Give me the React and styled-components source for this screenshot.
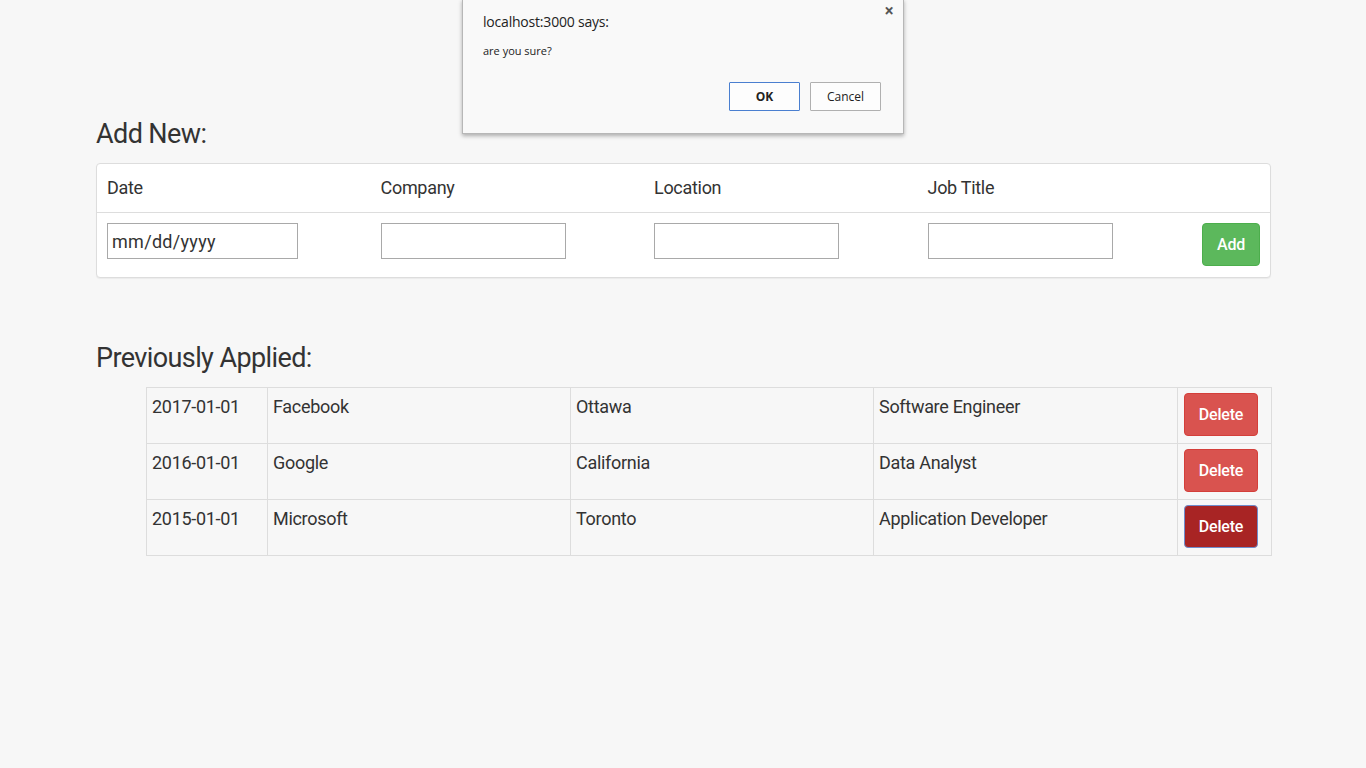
import React from "react";
import styled, { createGlobalStyle } from "styled-components";

const Global = createGlobalStyle`
  html, body { margin: 0; padding: 0; }
  body {
    background: #f7f7f7;
    font-family: Roboto, "Liberation Sans", sans-serif;
    color: #333;
    min-height: 768px;
  }
`;

const Page = styled.div`
  position: relative;
  width: 1366px;
  min-height: 768px;
`;

const Container = styled.div`
  width: 1175px;
  margin-left: 96px;
  padding-top: 118px;
`;

const Heading = styled.h3`
  margin: 0 0 ${(p) => p.$gap || 12}px 0;
  font-size: 27px;
  font-weight: 400;
  letter-spacing: -0.6px;
  line-height: 33px;
  color: #333;
`;

const Panel = styled.div`
  background: #fff;
  border: 1px solid #ddd;
  border-radius: 4px;
  box-shadow: 0 1px 1px rgba(0, 0, 0, 0.05);
  margin-bottom: 64px;
`;

const FormRow = styled.div`
  box-sizing: border-box;
  display: grid;
  grid-template-columns: repeat(4, 273.5px) 1fr;
  align-items: ${(p) => (p.$top ? "start" : "center")};
  padding: ${(p) => (p.$top ? "10px 10px 0" : "0 10px")};
  height: ${(p) => p.$h}px;
  border-bottom: ${(p) => (p.$divider ? "1px solid #ddd" : "none")};
`;

const Label = styled.div`
  font-size: 18px;
  letter-spacing: -0.3px;
  color: #333;
  margin-top: -2px;
`;

const Input = styled.input`
  box-sizing: border-box;
  width: ${(p) => p.$w}px;
  height: 36px;
  border: 1px solid #a9a9a9;
  background: #fff;
  padding: 0 4px;
  font-family: inherit;
  font-size: 18px;
  letter-spacing: 0.3px;
  color: #333;
  &::placeholder { color: #333; }
`;

const Btn = styled.button`
  box-sizing: border-box;
  justify-self: ${(p) => (p.$end ? "end" : "start")};
  display: block;
  height: ${(p) => p.$h || 43}px;
  width: ${(p) => p.$w}px;
  border-radius: 4px;
  border: 1px solid ${(p) => p.$border};
  background: ${(p) => p.$bg};
  color: #fff;
  font-family: inherit;
  font-size: 16px;
  font-weight: 500;
  letter-spacing: -0.2px;
  cursor: pointer;
  padding: 0;
`;

const Table = styled.table`
  margin-left: 50px;
  width: 1125px;
  border-collapse: collapse;
  table-layout: fixed;
  background: #f7f7f7;
`;

const Td = styled.td`
  box-sizing: border-box;
  border: 1px solid #ddd;
  padding: 5px 5px 5px ${(p) => (p.$btn ? 6 : 5)}px;
  height: 56px;
  vertical-align: top;
  font-size: 18px;
  letter-spacing: -0.3px;
  line-height: 28px;
  color: #333;
  width: ${(p) => p.$w}px;
`;

const Dialog = styled.div`
  position: absolute;
  left: 462px;
  top: -1px;
  width: 440px;
  height: 133px;
  background: #f9f9f9;
  border: 1px solid #b7b7b7;
  box-shadow: 0 2px 4px rgba(0, 0, 0, 0.3);
  font-family: "Open Sans", "Noto Sans", sans-serif;
  color: #222;
`;

const DialogBody = styled.div`
  display: flex;
  flex-direction: column;
  padding: 12px 22px 0 20px;
`;

const DialogTitle = styled.div`
  font-size: 14px;
  line-height: 20px;
  letter-spacing: -0.2px;
`;

const DialogMsg = styled.div`
  margin-top: 11px;
  font-size: 11px;
  line-height: 16px;
`;

const DialogActions = styled.div`
  display: flex;
  justify-content: flex-end;
  gap: 10px;
  margin-top: 23px;
`;

const DialogBtn = styled.button`
  box-sizing: border-box;
  width: 71px;
  height: 29px;
  background: #fdfdfd;
  border: 1px solid ${(p) => (p.$primary ? "#4a7fd0" : "#b0b0b0")};
  border-radius: 1px;
  font-family: "Open Sans", "Noto Sans", sans-serif;
  font-size: 12px;
  font-weight: ${(p) => (p.$primary ? 700 : 400)};
  color: #222;
  padding: 0;
`;

const Close = styled.span`
  position: absolute;
  right: 9px;
  top: -1px;
  font-size: 17px;
  color: #555;
  font-weight: 700;
`;

const rows = [
  ["2017-01-01", "Facebook", "Ottawa", "Software Engineer", false],
  ["2016-01-01", "Google", "California", "Data Analyst", false],
  ["2015-01-01", "Microsoft", "Toronto", "Application Developer", true],
];

export default function App() {
  return (
    <Page>
      <Global />
      <Container>
        <Heading>Add New:</Heading>
        <Panel>
          <FormRow $h={49} $divider>
            <Label>Date</Label>
            <Label>Company</Label>
            <Label>Location</Label>
            <Label>Job Title</Label>
            <div />
          </FormRow>
          <FormRow $h={64} $top>
            <Input $w={191} placeholder="mm/dd/yyyy" />
            <Input $w={185} />
            <Input $w={185} />
            <Input $w={185} />
            <Btn $end $w={58} $bg="#5cb85c" $border="#4cae4c">Add</Btn>
          </FormRow>
        </Panel>
        <Heading $gap={12}>Previously Applied:</Heading>
        <Table>
          <tbody>
            {rows.map(([d, c, l, j, active]) => (
              <tr key={d}>
                <Td $w={121}>{d}</Td>
                <Td $w={303}>{c}</Td>
                <Td $w={303}>{l}</Td>
                <Td $w={304}>{j}</Td>
                <Td $w={94} $btn>
                  <Btn
                    $w={74}
                    $h={43}
                    $bg={active ? "#a82424" : "#d9534f"}
                    $border={active ? "#6f8ccc" : "#d43f3a"}
                  >
                    Delete
                  </Btn>
                </Td>
              </tr>
            ))}
          </tbody>
        </Table>
      </Container>
      <Dialog>
        <Close>×</Close>
        <DialogBody>
          <DialogTitle>localhost:3000 says:</DialogTitle>
          <DialogMsg>are you sure?</DialogMsg>
          <DialogActions>
            <DialogBtn $primary>OK</DialogBtn>
            <DialogBtn>Cancel</DialogBtn>
          </DialogActions>
        </DialogBody>
      </Dialog>
    </Page>
  );
}
